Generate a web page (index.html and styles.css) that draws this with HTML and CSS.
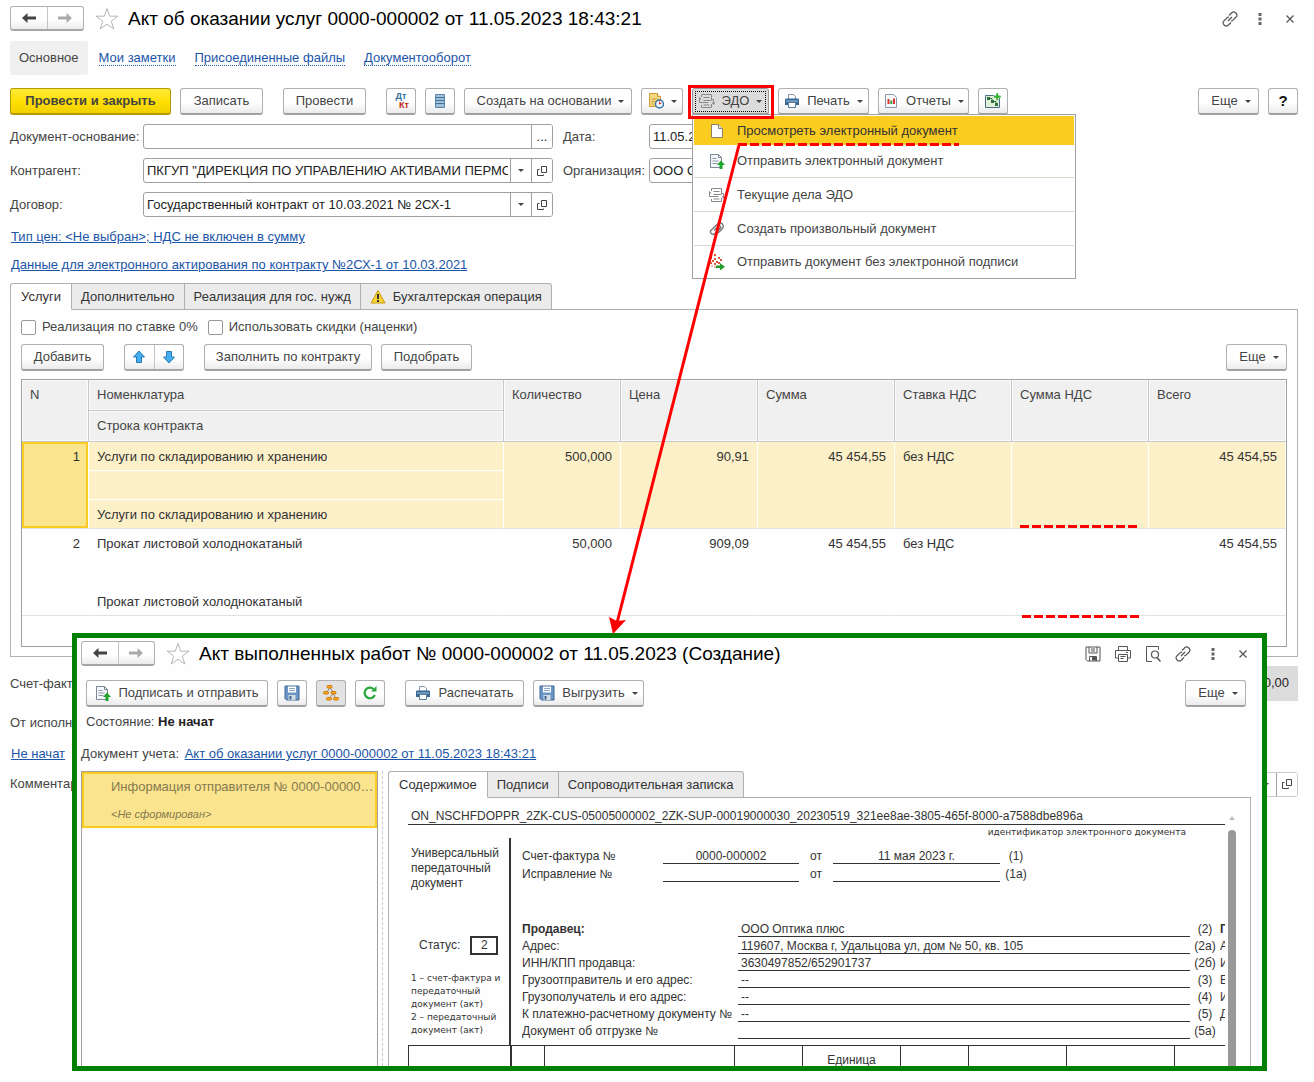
FILE: index.html
```html
<!DOCTYPE html>
<html lang="ru">
<head>
<meta charset="utf-8">
<meta name="viewport" content="width=device-width, initial-scale=1">
<title>Акт об оказании услуг 0000-000002</title>
<link rel="stylesheet" href="styles.css">
</head>
<body>
<svg class="sprite" aria-hidden="true">
  <symbol id="i-back" viewBox="0 0 16 16"><path d="M1 8 6.500 3v3.500H15v3H6.500V13z" fill="currentColor"/></symbol>
  <symbol id="i-forward" viewBox="0 0 16 16"><path d="M15 8 9.500 3v3.500H1v3h8.500V13z" fill="currentColor"/></symbol>
  <symbol id="i-star" viewBox="0 0 24 24"><path d="m12 1.500 2.700 7.700h8.200l-6.600 4.900 2.500 7.900-6.800-4.800L5.200 22l2.500-7.900-6.600-4.900h8.200z" fill="#fff" stroke="#b5b5b5"/></symbol>
  <symbol id="i-link" viewBox="0 0 16 16"><g fill="none" stroke="#555" stroke-width="1.200"><path d="M7 4.500 9.500 2a3 3 0 0 1 4.400 4.300L11 9.100a3 3 0 0 1-2 .8"/><path d="M9 11.500 6.500 14a3 3 0 0 1-4.400-4.300L5 6.900a3 3 0 0 1 2-.8"/><path d="m6 10 4-4"/></g></symbol>
  <symbol id="i-dots" viewBox="0 0 16 16"><path d="M6.500 2h3v3h-3zM6.500 6.500h3v3h-3zM6.500 11h3v3h-3z" fill="#666"/></symbol>
  <symbol id="i-close" viewBox="0 0 16 16"><path d="m4.500 4.500 7 7m0-7-7 7" fill="none" stroke="#555" stroke-width="1.200"/></symbol>
  <symbol id="i-rows" viewBox="0 0 16 16"><path d="M3.500 1.500h9v13h-9z" fill="#9fc0da" stroke="#5c86a9"/><path d="M3 4.500h10M3 7.500h10M3 10.500h10" stroke="#43739b"/></symbol>
  <symbol id="i-taskdoc" viewBox="0 0 16 16"><path d="M1.500.5h8l3 3v10h-11z" fill="#f5d985" stroke="#c99a35"/><path d="M9.500.5v3h3" fill="#fff" stroke="#c99a35"/><path d="M3.500 6h6M3.500 8.500h4M3.500 11h3" stroke="#c99a35"/><circle cx="11.500" cy="11" r="4" fill="#e9f3fb" stroke="#3872a5" stroke-width="1.400"/><path d="M11.500 11V8.500M11.500 11l2-1" stroke="#d33"/></symbol>
  <symbol id="i-edo" viewBox="0 0 16 16"><g fill="none" stroke="#8a8a8a"><path d="M2.500 4V1.500h10V6M2.500 12v2.500h10V11"/><path d="M4.500 4.500h6M4.500 7.500h8M2.500 9.500h7M4.500 12h6"/><path d="M3 9.500H.5V6M12 6.500h2.500V10"/></g><path d="M.5 4-1.500 6.500h4zM14.500 12l-2-2.500h4z" fill="#8a8a8a"/></symbol>
  <symbol id="i-print" viewBox="0 0 16 16"><path d="M4.500 6V1.500h5l2 2V6" fill="#fff" stroke="#8295a8"/><path d="M1 6.500Q1 5.500 2 5.500h12q1 0 1 1V12H1z" fill="#376893"/><path d="M2 8h12" stroke="#9ec4e2"/><path d="M4.500 9.500h7v5h-7z" fill="#fff" stroke="#597d9d"/></symbol>
  <symbol id="i-report" viewBox="0 0 16 16"><path d="M2.500 1.500h8l3 3v10h-11z" fill="#f6f9fc" stroke="#8998a8"/><path d="M4.500 6h2v5h-2zM10 5.500h2V11h-2z" fill="#d33"/><path d="M7.300 7.500h2V11h-2z" fill="#3a9c3a"/></symbol>
  <symbol id="i-chartadd" viewBox="0 0 16 16"><path d="M.5 2.500h14v12H.5z" fill="#dff0d8" stroke="#4b6d86"/><path d="M2 4h3v3H2zM6 7h3v3H6zM10 10h3v3h-3z" fill="#35713d"/><path d="M4 5.500h3v3h4v3" fill="none" stroke="#35713d"/><path d="M11 0h2.500v2.500H16V5h-2.500v2.500H11V5H8.500V2.500H11z" fill="#35b135" stroke="#fff" stroke-width=".5"/></symbol>
  <symbol id="i-page" viewBox="0 0 16 16"><path d="M2.500 1.500h7l4 4v9h-11z" fill="#fff" stroke="#8a8264"/><path d="M9.500 1.500v4h4" fill="#eee" stroke="#8a8264"/></symbol>
  <symbol id="i-send" viewBox="0 0 16 16"><path d="M1.500 1.500h8l3 3v10h-11z" fill="#f3f6fa" stroke="#7c8895"/><path d="M9.500 1.500v3h3" fill="none" stroke="#7c8895"/><path d="M3.500 5.500h4M3.500 8h6M3.500 10.500h5" stroke="#8c9bab"/><path d="m12 7.500 4 4.500h-2.500v4h-3v-4H8z" fill="#1fa52b"/></symbol>
  <symbol id="i-clip" viewBox="0 0 16 16"><path d="M5 9.500 9.500 5a1.500 1.500 0 0 1 2 2L6 12.500a2.500 2.500 0 0 1-3.700-3.600L8.500 3a3.300 3.300 0 0 1 4.800 4.700L9 12" fill="none" stroke="#777" stroke-width="1.400"/></symbol>
  <symbol id="i-nosign" viewBox="0 0 16 16"><path d="M5 0h2v2H5zM1 3h2v2H1zM5 4h2v2H5zM9 3h2v2H9zM3 6h2v2H3zM7 7h2v2H7zM11 5h2v2h-2zM1 8h2v2H1zM5 9h2v2H5zM9 8h2v2H9z" fill="#d9573f"/><path d="M5 12h2v2H5zM2 11h2v2H2z" fill="#f3b9ac"/><path d="M7 11.500h4V9l5 3.800-5 3.700V14H7z" fill="#259d2c"/></symbol>
  <symbol id="i-warn" viewBox="0 0 16 16"><path d="M8 1.500 15 14H1z" fill="#f8d332" stroke="#c59b15" stroke-linejoin="round"/><path d="M7 5h2v5H7zM7 11h2v2H7z" fill="#333"/></symbol>
  <symbol id="i-up" viewBox="0 0 16 16"><path d="m8 2 5.500 6h-3v5.500h-5V8h-3z" fill="#45aef0" stroke="#2a7ab5"/></symbol>
  <symbol id="i-down" viewBox="0 0 16 16"><path d="m8 14 5.500-6h-3V2.500h-5V8h-3z" fill="#45aef0" stroke="#2a7ab5"/></symbol>
  <symbol id="i-open" viewBox="0 0 16 16"><path d="M7.500 3.500h5v6h-5zM5.500 6.500h-2v6h6v-1" fill="none" stroke="#444"/></symbol>
  <symbol id="i-disk" viewBox="0 0 16 16"><path d="M1 1h14v14H2.500L1 13.500z" fill="#6a96c8" stroke="#3e6690"/><path d="M4 1.500h8v6H4z" fill="#fff"/><path d="M5 3.500h6M5 5.500h6" stroke="#8ba7c5"/><path d="M4.500 10h7v5h-7z" fill="#d5dbe2"/><path d="M5.500 11h2v3.500h-2z" fill="#3e6690"/></symbol>
  <symbol id="i-tree" viewBox="0 0 16 16"><path d="M7 2 3.500 8M7 2l6 12M10.500 8 6 14" fill="none" stroke="#888"/><g fill="#f9a81c" stroke="#d07b0c"><rect x="4" y=".5" width="5" height="2.500" rx="1"/><rect x=".5" y="6.500" width="5" height="2.500" rx="1"/><rect x="8" y="6.500" width="5" height="2.500" rx="1"/><rect x="3.500" y="12.500" width="5" height="2.500" rx="1"/><rect x="10.500" y="12.500" width="5" height="2.500" rx="1"/></g></symbol>
  <symbol id="i-refresh" viewBox="0 0 16 16"><path d="M12.800 10A5.300 5.300 0 1 1 11.500 4" fill="none" stroke="#27a63a" stroke-width="2.200"/><path d="M9 6.500h5.500V1z" fill="#27a63a"/></symbol>
  <symbol id="i-disk-line" viewBox="0 0 16 16"><path d="M1 1h14v14H2.500L1 13.500zM4 1v6h8V1M6 3h4M6 5h4M4.500 15v-4.500h7V15" fill="none" stroke="#555"/><path d="M7 11h4v3.500H7z" fill="#555"/></symbol>
  <symbol id="i-print-line" viewBox="0 0 16 16"><path d="M3.500 4V.5h9V4M3.500 12H.5V4.500h15V12h-3M3.500 8.500h9v7h-9zM5.500 10.500h5M5.500 12.500h3M11 6.500h2" fill="none" stroke="#555"/></symbol>
  <symbol id="i-preview" viewBox="0 0 16 16"><path d="M13.500 4V.5h-12v15H7" fill="none" stroke="#555"/><circle cx="10" cy="8.500" r="3.500" fill="none" stroke="#555" stroke-width="1.200"/><path d="m12 11.500 3.500 4" stroke="#555" stroke-width="1.500"/></symbol>
</svg>

<main class="page">
  <header class="titlebar">
    <div class="pair">
      <button type="button" aria-label="Назад"><svg class="ico"><use href="#i-back"/></svg></button>
      <button type="button" aria-label="Вперед" class="off"><svg class="ico"><use href="#i-forward"/></svg></button>
    </div>
    <svg class="star"><use href="#i-star"/></svg>
    <h1>Акт об оказании услуг 0000-000002 от 11.05.2023 18:43:21</h1>
    <div class="window-tools">
      <svg class="ico"><use href="#i-link"/></svg>
      <svg class="ico"><use href="#i-dots"/></svg>
      <svg class="ico"><use href="#i-close"/></svg>
    </div>
  </header>

  <nav class="sections">
    <span class="current">Основное</span>
    <a href="#">Мои заметки</a>
    <a href="#">Присоединенные файлы</a>
    <a href="#">Документооборот</a>
  </nav>

  <div class="toolbar">
    <button type="button" class="btn primary">Провести и закрыть</button>
    <button type="button" class="btn w-s">Записать</button>
    <button type="button" class="btn w-s apart">Провести</button>
    <button type="button" class="btn icon apart" aria-label="Проводки"><span class="dtkt"><span>Дт</span><span>Кт</span></span></button>
    <button type="button" class="btn icon" aria-label="Движения"><svg class="ico"><use href="#i-rows"/></svg></button>
    <button type="button" class="btn w-xl drop lead">Создать на основании</button>
    <button type="button" class="btn w-task drop" aria-label="Задачи"><svg class="ico"><use href="#i-taskdoc"/></svg></button>
    <div class="menu-anchor">
      <button type="button" class="btn w-edo drop pressed"><svg class="ico"><use href="#i-edo"/></svg>ЭДО</button>
      <ul class="menu">
        <li class="active"><svg class="ico"><use href="#i-page"/></svg>Просмотреть электронный документ</li>
        <li><svg class="ico"><use href="#i-send"/></svg>Отправить электронный документ</li>
        <li class="group"><svg class="ico"><use href="#i-edo"/></svg>Текущие дела ЭДО</li>
        <li class="group"><svg class="ico"><use href="#i-clip"/></svg>Создать произвольный документ</li>
        <li class="group"><svg class="ico"><use href="#i-nosign"/></svg>Отправить документ без электронной подписи</li>
      </ul>
      <span class="highlight"></span>
    </div>
    <button type="button" class="btn w-m drop"><svg class="ico"><use href="#i-print"/></svg>Печать</button>
    <button type="button" class="btn w-m drop"><svg class="ico"><use href="#i-report"/></svg>Отчеты</button>
    <button type="button" class="btn icon" aria-label="Показатели"><svg class="ico"><use href="#i-chartadd"/></svg></button>
    <button type="button" class="btn more drop lead push">Еще</button>
    <button type="button" class="btn icon help">?</button>
  </div>

  <div class="fields">
    <label for="base">Документ-основание:</label>
    <div class="field"><input id="base" type="text"><button type="button" aria-label="Выбрать">...</button></div>
    <label for="date" class="second">Дата:</label>
    <div class="field short"><input id="date" type="text" value="11.05.2023 18:43:21"></div>

    <label for="partner">Контрагент:</label>
    <div class="field"><input id="partner" type="text" value="ПКГУП &quot;ДИРЕКЦИЯ ПО УПРАВЛЕНИЮ АКТИВАМИ ПЕРМСКОГО КРАЯ&quot;"><button type="button" aria-label="Список" class="arrow"></button><button type="button" aria-label="Открыть"><svg class="ico"><use href="#i-open"/></svg></button></div>
    <label for="org" class="second">Организация:</label>
    <div class="field short"><input id="org" type="text" value="ООО Оптика плюс"></div>

    <label for="contract">Договор:</label>
    <div class="field"><input id="contract" type="text" value="Государственный контракт от 10.03.2021 № 2СХ-1"><button type="button" aria-label="Список" class="arrow"></button><button type="button" aria-label="Открыть"><svg class="ico"><use href="#i-open"/></svg></button></div>
  </div>

  <div class="links">
    <a href="#">Тип цен: &lt;Не выбран&gt;; НДС не включен в сумму</a>
    <a href="#">Данные для электронного актирования по контракту №2СХ-1 от 10.03.2021</a>
  </div>

  <div class="tabs">
    <button type="button" class="tab on">Услуги</button>
    <button type="button" class="tab">Дополнительно</button>
    <button type="button" class="tab">Реализация для гос. нужд</button>
    <button type="button" class="tab"><svg class="ico"><use href="#i-warn"/></svg>Бухгалтерская операция</button>
  </div>
  <section class="panel">
    <div class="checks">
      <label><input type="checkbox">Реализация по ставке 0%</label>
      <label><input type="checkbox">Использовать скидки (наценки)</label>
    </div>
    <div class="toolbar">
      <button type="button" class="btn w-s">Добавить</button>
      <div class="pair small apart">
        <button type="button" aria-label="Вверх"><svg class="ico"><use href="#i-up"/></svg></button>
        <button type="button" aria-label="Вниз"><svg class="ico"><use href="#i-down"/></svg></button>
      </div>
      <button type="button" class="btn w-xl apart">Заполнить по контракту</button>
      <button type="button" class="btn w-m">Подобрать</button>
      <button type="button" class="btn more drop lead push">Еще</button>
    </div>
    <div class="grid">
      <table>
        <colgroup><col class="c-n"><col><col class="c-qty"><col class="c-sum"><col class="c-sum"><col class="c-qty"><col class="c-sum"><col class="c-sum"></colgroup>
        <thead>
          <tr><th rowspan="2">N</th><th>Номенклатура</th><th rowspan="2">Количество</th><th rowspan="2">Цена</th><th rowspan="2">Сумма</th><th rowspan="2">Ставка НДС</th><th rowspan="2">Сумма НДС</th><th rowspan="2">Всего</th></tr>
          <tr><th class="sub">Строка контракта</th></tr>
        </thead>
        <tbody class="selected">
          <tr><td rowspan="3" class="num focus">1</td><td>Услуги по складированию и хранению</td><td rowspan="3" class="num">500,000</td><td rowspan="3" class="num">90,91</td><td rowspan="3" class="num">45 454,55</td><td rowspan="3">без НДС</td><td rowspan="3"></td><td rowspan="3" class="num">45 454,55</td></tr>
          <tr><td></td></tr>
          <tr><td>Услуги по складированию и хранению</td></tr>
        </tbody>
        <tbody>
          <tr><td rowspan="3" class="num">2</td><td>Прокат листовой холоднокатаный</td><td rowspan="3" class="num">50,000</td><td rowspan="3" class="num">909,09</td><td rowspan="3" class="num">45 454,55</td><td rowspan="3">без НДС</td><td rowspan="3"></td><td rowspan="3" class="num">45 454,55</td></tr>
          <tr><td></td></tr>
          <tr><td>Прокат листовой холоднокатаный</td></tr>
        </tbody>
      </table>
    </div>
  </section>

  <footer class="summary">
    <div class="line tall"><span>Счет-фактура:</span><output class="total">0,00</output></div>
    <div class="line"><span>От исполнителя:</span></div>
    <div class="line"><a href="#">Не начат</a></div>
    <div class="line"><label for="comment">Комментарий:</label><div class="field comment"><input id="comment" type="text"><button type="button" aria-label="Список" class="arrow"></button><button type="button" aria-label="Открыть"><svg class="ico"><use href="#i-open"/></svg></button></div></div>
  </footer>

  <section class="dialog">
    <header class="titlebar">
      <div class="pair">
        <button type="button" aria-label="Назад"><svg class="ico"><use href="#i-back"/></svg></button>
        <button type="button" aria-label="Вперед" class="off"><svg class="ico"><use href="#i-forward"/></svg></button>
      </div>
      <svg class="star"><use href="#i-star"/></svg>
      <h2>Акт выполненных работ № 0000-000002 от 11.05.2023 (Создание)</h2>
      <div class="window-tools">
        <svg class="ico"><use href="#i-disk-line"/></svg>
        <svg class="ico"><use href="#i-print-line"/></svg>
        <svg class="ico"><use href="#i-preview"/></svg>
        <svg class="ico"><use href="#i-link"/></svg>
        <svg class="ico"><use href="#i-dots"/></svg>
        <svg class="ico"><use href="#i-close"/></svg>
      </div>
    </header>
    <div class="toolbar">
      <button type="button" class="btn w-sign"><svg class="ico"><use href="#i-send"/></svg>Подписать и отправить</button>
      <button type="button" class="btn icon" aria-label="Записать"><svg class="ico"><use href="#i-disk"/></svg></button>
      <button type="button" class="btn icon pushed" aria-label="Структура"><svg class="ico"><use href="#i-tree"/></svg></button>
      <button type="button" class="btn icon" aria-label="Обновить"><svg class="ico"><use href="#i-refresh"/></svg></button>
      <button type="button" class="btn w-l apart"><svg class="ico"><use href="#i-print"/></svg>Распечатать</button>
      <button type="button" class="btn w-out drop"><svg class="ico"><use href="#i-disk"/></svg>Выгрузить</button>
      <button type="button" class="btn more drop lead push">Еще</button>
    </div>
    <p class="state">Состояние: <b>Не начат</b></p>
    <p class="source">Документ учета: <a href="#">Акт об оказании услуг 0000-000002 от 11.05.2023 18:43:21</a></p>
    <div class="split">
      <div class="list">
        <div class="entry">
          <span class="name">Информация отправителя № 0000-000002 от 11.05.2023</span>
          <em>&lt;Не сформирован&gt;</em>
        </div>
      </div>
      <div class="viewer">
        <div class="tabs">
          <button type="button" class="tab on">Содержимое</button>
          <button type="button" class="tab">Подписи</button>
          <button type="button" class="tab">Сопроводительная записка</button>
        </div>
        <div class="sheet">
          <div class="doc">
            <div class="doc-id">ON_NSCHFDOPPR_2ZK-CUS-05005000002_2ZK-SUP-00019000030_20230519_321ee8ae-3805-465f-8000-a7588dbe896a</div>
            <div class="doc-id-note">идентификатор электронного документа</div>
            <div class="doc-top">
              <aside>
                <p class="kind">Универсальный передаточный документ</p>
                <p class="status">Статус: <span>2</span></p>
                <p class="legend">1 – счет-фактура и<br>передаточный<br>документ (акт)<br>2 – передаточный<br>документ (акт)</p>
              </aside>
              <div class="doc-main">
                <div class="invoice">
                  <span>Счет-фактура №</span><span class="fill">0000-000002</span><span class="mid">от</span><span class="fill">11 мая 2023 г.</span><span class="mid">(1)</span>
                  <span>Исправление №</span><span class="fill"></span><span class="mid">от</span><span class="fill"></span><span class="mid">(1а)</span>
                </div>
                <div class="party">
                  <b>Продавец:</b><span class="fill">ООО Оптика плюс</span><span class="mid">(2)</span><b>Покупатель:</b>
                  <span>Адрес:</span><span class="fill">119607, Москва г, Удальцова ул, дом № 50, кв. 105</span><span class="mid">(2а)</span><span>Адрес:</span>
                  <span>ИНН/КПП продавца:</span><span class="fill">3630497852/652901737</span><span class="mid">(2б)</span><span>ИНН/КПП покупателя:</span>
                  <span>Грузоотправитель и его адрес:</span><span class="fill">--</span><span class="mid">(3)</span><span>Валюта:</span>
                  <span>Грузополучатель и его адрес:</span><span class="fill">--</span><span class="mid">(4)</span><span>Идентификатор:</span>
                  <span>К платежно-расчетному документу №</span><span class="fill">--</span><span class="mid">(5)</span><span>Дата:</span>
                  <span>Документ об отгрузке №</span><span class="fill"></span><span class="mid">(5а)</span><span></span>
                </div>
              </div>
            </div>
            <table class="doc-table">
              <colgroup><col class="d-102"><col class="d-34"><col class="d-190"><col class="d-68"><col class="d-98"><col class="d-68"><col class="d-98"><col class="d-108"><col></colgroup>
              <tr><td></td><td></td><td></td><td></td><td>Единица</td><td></td><td></td><td></td><td></td></tr>
            </table>
          </div>
          <div class="scroll"><span class="tip"></span><span class="thumb"></span></div>
        </div>
      </div>
    </div>
  </section>

  <svg class="marks" aria-hidden="true">
    <g fill="none" stroke="#f00" stroke-width="3">
      <path d="M739 145 617 623"/>
      <path d="M738 144.500h221M1020 526.500h118M1022 616.500h118" stroke-dasharray="9 3"/>
    </g>
    <path d="m613 634-4-17 8 4 9-1z" fill="#f00"/>
  </svg>
</main>
</body>
</html>
```
FILE: styles.css
```css
* { box-sizing: border-box; }
body {
  margin: 0;
  background: #fefefe;
  color: #444;
  font: 13px/16px "Liberation Sans", Arial, sans-serif;
}
button, input { font: inherit; color: inherit; }
h1, h2, p, ul { margin: 0; padding: 0; }
a { color: #1b55a8; }
.sprite { position: absolute; width: 0; height: 0; }
.ico { width: 16px; height: 16px; flex: none; overflow: visible; }
.page {
  position: relative;
  min-height: 100vh;
  padding: 6px 16px 0 10px;
  overflow: hidden;
}

/* Title bar */
.titlebar { display: flex; align-items: center; height: 25px; }
.titlebar h1, .titlebar h2 {
  font-size: 19px;
  line-height: 25px;
  font-weight: normal;
  color: #000;
  white-space: nowrap;
}
.star { width: 24px; height: 24px; margin: 0 9px 0 11px; flex: none; }
.pair {
  display: flex;
  width: 74px;
  height: 25px;
  border: 1px solid #b0b0b0;
  border-bottom: 2px solid #a6a6a6;
  border-radius: 3px;
  background: linear-gradient(#fff 55%, #ececec);
}
.pair button {
  flex: 1;
  display: flex;
  align-items: center;
  justify-content: center;
  padding: 0;
  border: 0;
  background: none;
}
.pair button + button { border-left: 1px solid #c4c4c4; }
.pair .off { color: #aaa; }
.pair.small { width: 60px; height: 27px; }
.window-tools { display: flex; gap: 14px; margin-left: auto; }

/* Sections */
.sections { display: flex; align-items: center; gap: 19px; height: 34px; margin-top: 10px; }
.sections .current { padding: 9px; background: #f0f0f0; border-radius: 3px; margin-right: -8px; }
.sections a { text-decoration: none; border-bottom: 1px dotted #1b55a8; line-height: 14px; }

/* Toolbar */
.toolbar { display: flex; gap: 9px; margin-top: 13px; }
.btn {
  display: flex;
  align-items: center;
  justify-content: center;
  gap: 7px;
  height: 27px;
  padding: 0 7px;
  border: 1px solid #b0b0b0;
  border-bottom: 2px solid #a0a0a0;
  border-radius: 3px;
  background: linear-gradient(#fff 55%, #ebebeb);
  white-space: nowrap;
}
.btn.primary {
  width: 161px;
  font-weight: bold;
  border-color: #b29a00;
  background: linear-gradient(#ffea3a, #ffdf00 55%, #f0d000);
}
.btn.icon { width: 30px; padding: 0; }
.btn.help { font-weight: bold; font-size: 15px; color: #111; }
.apart { margin-left: 11px; }
.push { margin-left: auto; }
.w-s { width: 83px; }
.w-m { width: 91px; }
.w-l { width: 119px; }
.w-xl { width: 168px; }
.w-task { width: 42px; }
.w-edo { width: 77px; }
.w-out { width: 111px; }
.w-sign { width: 182px; }
.more { width: 61px; }
.drop::after, .arrow::after {
  content: "";
  border: 3px solid transparent;
  border-top-color: #444;
  border-bottom: 0;
}
.btn.lead { padding-left: 12px; }
.btn.pressed { background: #dcdcdc; border-color: #999; outline: 1px dotted #000; outline-offset: -4px; }
.btn.pushed { background: #e2e2e2; }
.dtkt { display: flex; flex-direction: column; font-size: 9px; line-height: 9px; font-weight: bold; color: #2d6c9c; }
.dtkt span + span { color: #c22412; margin-left: 6px; }

/* Drop-down menu */
.menu-anchor { position: relative; }
.menu {
  position: absolute;
  z-index: 2;
  top: 26px;
  left: 0;
  width: 384px;
  padding: 1px;
  list-style: none;
  background: #fff;
  border: 1px solid #a0a0a0;
}
.menu li { display: flex; align-items: center; gap: 12px; height: 32px; padding-left: 15px; }
.menu .active { height: 29px; background: #fbcc20; color: #333; }
.menu .group { height: 34px; border-top: 1px solid #d8d8cc; }
.menu .group:last-child { height: 32px; }
.highlight {
  position: absolute;
  z-index: 3;
  inset: -3px -5px -4px -4px;
  border: 3px solid #f00;
}

/* Fields */
.fields {
  display: grid;
  grid-template-columns: 133px 410px 96px 1fr;
  row-gap: 9px;
  align-items: center;
  margin-top: 9px;
}
.second { padding-left: 10px; }
.field {
  display: flex;
  height: 25px;
  border: 1px solid #a0a0a0;
  border-radius: 3px;
  background: #fff;
  color: #222;
  overflow: hidden;
}
.field.short { width: 160px; }
.field input { flex: 1; min-width: 0; padding: 0 2px 0 3px; border: 0; background: none; outline: 0; }
.field button {
  display: flex;
  align-items: center;
  justify-content: center;
  width: 21px;
  padding: 0;
  border: 0;
  border-left: 1px solid #a0a0a0;
  background: #fff;
}
.links { display: flex; flex-direction: column; align-items: flex-start; gap: 12px; margin: 12px 1px 10px; }

/* Tabs */
.tabs { display: flex; position: relative; z-index: 1; margin-bottom: -1px; }
.tab {
  display: flex;
  align-items: center;
  gap: 7px;
  height: 27px;
  padding: 0 9px;
  border: 1px solid #b0b0b0;
  border-left-width: 0;
  background: #ebebeb;
  color: #333;
  white-space: nowrap;
}
.tab.on { padding: 0 10px; background: #fefefe; border-left-width: 1px; border-bottom-color: #fefefe; border-radius: 3px 0 0 0; }
.tab:last-child { border-radius: 0 3px 0 0; }
.panel { height: 348px; padding: 9px 10px; border: 1px solid #b0b0b0; }
.checks { display: flex; gap: 10px; }
.checks label { display: flex; align-items: center; gap: 6px; }
.checks input {
  appearance: none;
  width: 15px;
  height: 15px;
  margin: 0;
  border: 1px solid #999;
  border-radius: 2px;
  background: #fff;
}
.panel .toolbar { margin: 9px 0 8px; }

/* Services table */
.grid { height: 268px; border: 1px solid #a0a0a0; }
.grid table { width: 100%; table-layout: fixed; border-collapse: separate; border-spacing: 0; }
.c-n { width: 67px; }
.c-qty { width: 117px; }
.c-sum { width: 137px; }
.grid th {
  height: 31px;
  padding: 7px 8px;
  font-weight: normal;
  text-align: left;
  vertical-align: top;
  background: #f0f0f0;
  border-right: 1px solid #c8c8c8;
  border-bottom: 1px solid #c8c8c8;
  box-shadow: inset 0 0 0 1px #fafafa;
}
.grid th:last-child { border-right: 0; }
.grid th.sub { border-right: 1px solid #c8c8c8; }
.grid td { height: 29px; padding: 7px 8px 5px; vertical-align: top; color: #333; border-bottom: 1px solid transparent; border-right: 1px solid transparent; }
.grid .num { text-align: right; }
.grid .selected td { background: #fcf0c8; border-color: #fff; }
.grid .selected .focus { background: #fbe48e; box-shadow: inset 0 0 0 2px #fbcc20; }
.grid td[rowspan], .grid tbody tr:last-child td { border-bottom-color: #e2e2e2; }

/* Form footer */
.summary { display: flex; flex-direction: column; margin-top: 9px; }
.line { display: flex; align-items: center; justify-content: space-between; height: 30px; }
.line.tall { height: 35px; margin-bottom: 6px; }
.line:nth-child(2) { height: 32px; }
.line a { margin-left: 1px; }
.total { padding: 9px 9px 10px; background: #dcdcdc; color: #222; }
.comment { width: 1155px; border-color: #ccc; }

/* Electronic document window */
.dialog {
  position: absolute;
  z-index: 1;
  top: 633px;
  right: 47px;
  bottom: 11px;
  left: 72px;
  display: flex;
  flex-direction: column;
  padding: 3px 11px 0 4px;
  border: 5px solid #008000;
  background: #fefefe;
  overflow: hidden;
}
.dialog > .toolbar { margin: 14px 5px 0; }
.state { margin: 7px 5px 0; }
.state b { color: #222; }
.source { margin-top: 16px; }
.source a { margin-left: 2px; }
.split { display: flex; flex: 1; min-height: 0; margin-top: 9px; }
.list { width: 297px; margin-right: 4px; border: 1px solid #a0a0a0; border-bottom: 0; }
.entry { height: 56px; padding: 5px 1px 0 27px; border: 2px solid #fbcc20; background: #fbe48e; color: #857a50; }
.entry .name { display: block; overflow: hidden; text-overflow: ellipsis; white-space: nowrap; }
.entry em { display: block; margin-top: 11px; font-size: 11px; }
.viewer { display: flex; flex: 1; flex-direction: column; min-width: 0; padding-left: 5px; border-left: 1px dashed #ccc; }
.sheet { display: flex; flex: 1; min-height: 0; padding: 10px 14px 0 19px; border: 1px solid #b0b0b0; border-bottom: 0; }
.doc { flex: 1; min-width: 0; overflow: hidden; color: #333; font-size: 12px; line-height: 15px; white-space: nowrap; }
.doc-id { height: 17px; padding: 1px 0 0 3px; border-bottom: 1px solid #333; }
.doc-id-note {
  height: 13px;
  padding-right: 39px;
  font: 9px/15px "DejaVu Sans", Verdana, sans-serif;
  text-align: right;
}
.doc-top { display: flex; height: 207px; }
.doc aside { width: 103px; flex: none; padding: 8px 0 0 3px; border-right: 2px solid #333; white-space: normal; }
.status { display: flex; align-items: center; gap: 10px; margin: 45px 0 0 8px; }
.status span { width: 28px; border: 2px solid #333; text-align: center; }
.legend { margin-top: 17px; font: 9px/13px "DejaVu Sans", Verdana, sans-serif; white-space: nowrap; }
.doc-main { flex: 1; padding: 8px 0 0 11px; }
.invoice { display: grid; grid-template-columns: 141px 136px 34px 167px 32px; grid-auto-rows: 18px; line-height: 20px; }
.party { display: grid; grid-template-columns: 216px 1fr 30px 5px; grid-auto-rows: 17px; line-height: 19px; margin-top: 38px; overflow: hidden; }
.invoice .fill { border-bottom: 1px solid #333; text-align: center; }
.party .fill { border-bottom: 1px solid #333; padding-left: 3px; }
.mid { text-align: center; }
.doc-table { width: 100%; table-layout: fixed; border-collapse: collapse; border-top: 1px solid #333; border-left: 1px solid #333; }
.doc-table td { height: 40px; padding: 7px 0; vertical-align: top; text-align: center; border-right: 1px solid #333; font-size: 12px; line-height: 15px; }
.doc-table td:first-child { border-right-width: 2px; }
.doc-table td:last-child { border-right: 0; }
.d-102 { width: 102px; }
.d-34 { width: 34px; }
.d-190 { width: 190px; }
.d-68 { width: 68px; }
.d-98 { width: 98px; }
.d-108 { width: 108px; }
.scroll { display: flex; flex-direction: column; align-items: center; gap: 10px; width: 14px; padding-top: 8px; margin-right: -3px; }
.tip { border: 3px solid transparent; border-bottom: 4px solid #bbb; border-top: 0; }
.thumb { flex: 1; width: 8px; border-radius: 4px 4px 0 0; background: #999; }

/* Callout lines over the form */
.marks { position: absolute; z-index: 4; top: 0; left: 0; width: 100%; height: 100%; pointer-events: none; }
```
